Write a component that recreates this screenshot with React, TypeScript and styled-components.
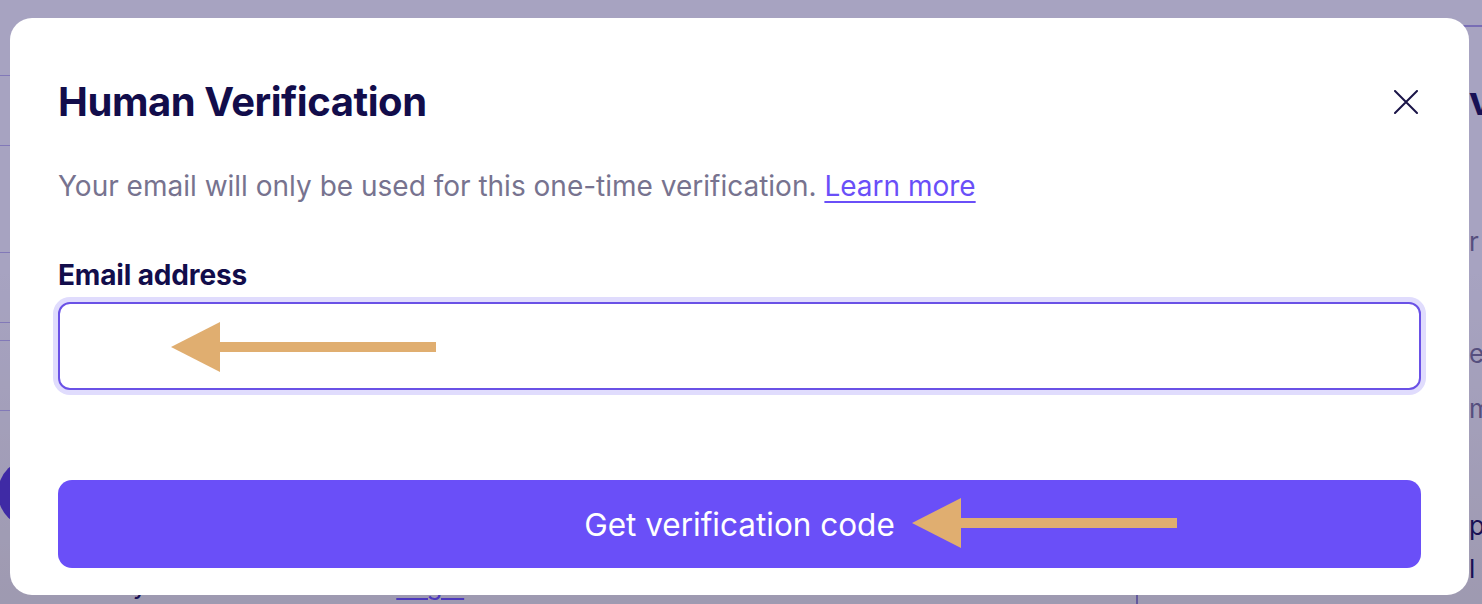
import React from "react";
import styled, { createGlobalStyle } from "styled-components";

const GlobalStyle = createGlobalStyle`
  html, body { margin: 0; padding: 0; }
  body {
    width: 1482px;
    height: 604px;
    overflow: hidden;
    font-family: Inter, "Noto Sans", Arial, sans-serif;
    background: #ffffff;
  }
  * { box-sizing: border-box; }
`;

/* ---------- page behind the modal ---------- */
const Page = styled.div`
  display: grid;
  grid-template-columns: 1136px 1fr;
  grid-template-rows: 604px;
  height: 604px;
  background: linear-gradient(180deg, #ffffff 0%, #ffffff 45%, #f1f0e4 100%);
  overflow: hidden;
`;

const MainCol = styled.div`
  display: flex;
  flex-direction: column;
  min-height: 0;
`;

const Row = styled.div<{ $h: number }>`
  height: ${(p) => p.$h}px;
  flex: none;
  border-bottom: 1px solid #c2baf0;
`;

const Pill = styled.div`
  width: 220px;
  height: 70px;
  margin-top: 47px;
  margin-left: -2px;
  border-radius: 35px;
  background: #5336d0;
  flex: none;
`;

const Footer = styled.div`
  margin-top: auto;
  margin-bottom: 1px;
  display: flex;
  gap: 249px;
  padding-left: 53px;
  font-size: 26px;
  line-height: 36px;
  color: #120d4b;
`;

const FooterLink = styled.a`
  color: #6a4ff8;
  text-decoration: underline;
  text-underline-offset: 4px;
`;

const SideCol = styled.div`
  display: flex;
  flex-direction: column;
  min-height: 0;
`;

const SideTop = styled.div`
  height: 27px;
  border-bottom: 2px solid #b1a6ec;
  flex: none;
`;

const SideLine = styled.div<{ $mt: number; $bold?: boolean; $dark?: boolean }>`
  margin-top: ${(p) => p.$mt}px;
  padding-left: 333px;
  white-space: nowrap;
  flex: none;
  font-size: ${(p) => (p.$bold ? 40 : 26)}px;
  line-height: ${(p) => (p.$bold ? 48 : 36)}px;
  font-weight: ${(p) => (p.$bold ? 700 : 400)};
  color: ${(p) => (p.$dark ? "#120d4b" : "#77738f")};
`;

const SideFooter = styled.div`
  flex: 1;
  min-height: 10px;
  border-left: 2px solid #8f86c4;
`;

/* ---------- modal ---------- */
const Overlay = styled.div`
  position: fixed;
  inset: 0;
  background: rgba(35, 25, 100, 0.4);
  padding: 18px 13px 9px 10px;
  display: flex;
`;

const Dialog = styled.div`
  flex: 1;
  background: #ffffff;
  border-radius: 22px;
  padding: 60px 48px 27px;
  display: flex;
  flex-direction: column;
`;

const Header = styled.div`
  display: flex;
  align-items: center;
  justify-content: space-between;
`;

const Title = styled.h2`
  margin: 0;
  font-size: 40px;
  line-height: 48px;
  font-weight: 700;
  color: #120d4b;
  letter-spacing: -0.45px;
`;

const CloseButton = styled.button`
  width: 24px;
  height: 24px;
  margin-right: 3px;
  padding: 0;
  border: none;
  background: transparent;
  display: flex;
  align-items: center;
  justify-content: center;
  cursor: pointer;
`;

const Subtitle = styled.p`
  margin: 42px 0 0;
  font-size: 28px;
  line-height: 36px;
  color: #77738f;
`;

const LearnMore = styled.a`
  color: #6a4ff8;
  text-decoration: underline;
  text-decoration-thickness: 2px;
  text-underline-offset: 5px;
`;

const Label = styled.label`
  margin-top: 53px;
  font-size: 28px;
  line-height: 36px;
  font-weight: 700;
  color: #120d4b;
  letter-spacing: -0.15px;
`;

const InputWrap = styled.div`
  position: relative;
  margin-top: 9px;
`;

const EmailInput = styled.input`
  display: block;
  width: 100%;
  height: 88px;
  border: 2px solid #6a51e6;
  border-radius: 12px;
  box-shadow: 0 0 0 5px #e0dcfd;
  outline: none;
  font-family: inherit;
  font-size: 26px;
  padding: 0 24px;
  background: #ffffff;
`;

const SubmitButton = styled.button`
  position: relative;
  margin-top: 90px;
  height: 88px;
  width: 100%;
  border: none;
  border-radius: 14px;
  background: #6a4ff8;
  color: #ffffff;
  font-family: inherit;
  font-size: 31.5px;
  font-weight: 400;
  cursor: pointer;
`;

const ArrowMark = styled.svg<{ $left: number; $top: number }>`
  position: absolute;
  left: ${(p) => p.$left}px;
  top: ${(p) => p.$top}px;
  pointer-events: none;
`;

const Arrow = ({ left, top }: { left: number; top: number }) => (
  <ArrowMark $left={left} $top={top} width="265" height="50" viewBox="0 0 265 50">
    <polygon points="0,25 49,0 49,50" fill="#e0ae70" />
    <rect x="48" y="20" width="217" height="10" fill="#e0ae70" />
  </ArrowMark>
);

export default function App() {
  return (
    <>
      <GlobalStyle />
      <Page>
        <MainCol>
          <Row $h={76} />
          <Row $h={70} />
          <Row $h={107} />
          <Row $h={70} />
          <Row $h={18} />
          <Row $h={70} />
          <Pill />
          <Footer>
            <span>Already</span>
            <FooterLink href="#">Login</FooterLink>
          </Footer>
        </MainCol>
        <SideCol>
          <SideTop />
          <SideLine $mt={50} $bold $dark>view</SideLine>
          <SideLine $mt={99}>r</SideLine>
          <SideLine $mt={76}>ea</SideLine>
          <SideLine $mt={19}>m</SideLine>
          <SideLine $mt={81} $dark>po</SideLine>
          <SideLine $mt={7} $dark>l</SideLine>
          <SideFooter />
        </SideCol>
      </Page>
      <Overlay>
        <Dialog role="dialog" aria-labelledby="hv-title">
          <Header>
            <Title id="hv-title">Human Verification</Title>
            <CloseButton aria-label="Close">
              <svg width="24" height="24" viewBox="0 0 24 24">
                <path d="M1 1 L23 23 M23 1 L1 23" stroke="#1a1448" strokeWidth="2" strokeLinecap="round" fill="none" />
              </svg>
            </CloseButton>
          </Header>
          <Subtitle>
            Your email will only be used for this one-time verification.{" "}
            <LearnMore href="#">Learn more</LearnMore>
          </Subtitle>
          <Label htmlFor="hv-email">Email address</Label>
          <InputWrap>
            <EmailInput id="hv-email" type="email" />
            <Arrow left={113} top={20} />
          </InputWrap>
          <SubmitButton type="button">
            Get verification code
            <Arrow left={854} top={18} />
          </SubmitButton>
        </Dialog>
      </Overlay>
    </>
  );
}
